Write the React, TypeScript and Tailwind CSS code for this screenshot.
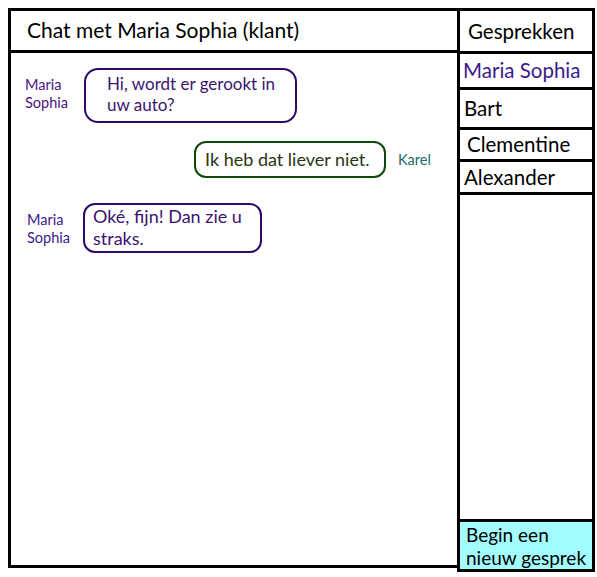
const font = { fontFamily: "Lato, 'Open Sans', sans-serif" }

const gesprekken = [
  { name: "Maria Sophia", h: "h-[33px]", color: "text-[#3b1a8c]", pl: "pl-[3px]" },
  { name: "Bart", h: "h-[37px]", color: "text-black", pl: "pl-[4px]" },
  { name: "Clementine", h: "h-[29px]", color: "text-black", pl: "pl-[7px]" },
  { name: "Alexander", h: "h-[30px]", color: "text-black", pl: "pl-[4px]" },
]

function Label({ children, className }: { children: React.ReactNode; className: string }) {
  return <div className={`text-[14.5px] leading-[18px] ${className}`}>{children}</div>
}

export default function App() {
  return (
    <div className="w-[597px] h-[577px] bg-white pl-[8px] pt-[8px]" style={font}>
      <div className="flex">
        {/* Chat panel */}
        <div className="w-[449px] h-[560px] border-l-[3px] border-t-[3px] border-b-[3px] border-black flex flex-col">
          <div className="h-[42px] border-b-[3px] border-black pl-[16px] flex items-center">
            <h1 className="text-[21px] text-black pb-[2px]">Chat met Maria Sophia (klant)</h1>
          </div>

          <div className="flex flex-col pt-[15px]">
            {/* message 1 */}
            <div className="flex items-start">
              <Label className="w-[73px] pl-[14px] pt-[8px] text-[#4a1480]">
                Maria
                <br />
                Sophia
              </Label>
              <div className="w-[213px] h-[55px] border-2 border-[#2e0a66] rounded-[14px] pl-[21px] pt-[3px] text-[17px] leading-[21px] text-[#3a1470]">
                Hi, wordt er gerookt in
                <br />
                uw auto?
              </div>
            </div>

            {/* message 2 */}
            <div className="flex items-center mt-[18px] ml-[183px]">
              <div className="w-[192px] h-[37px] border-2 border-[#0b4a0b] rounded-[12px] pl-[9px] flex items-center text-[18px] text-[#2a3410]">
                Ik heb dat liever niet.
              </div>
              <div className="ml-[12px] text-[14.5px] text-[#1d6a6a]">Karel</div>
            </div>

            {/* message 3 */}
            <div className="flex items-start mt-[25px]">
              <Label className="w-[72px] pl-[16px] pt-[8px] text-[#3c1a8a]">
                Maria
                <br />
                Sophia
              </Label>
              <div className="w-[179px] h-[50px] border-2 border-[#2e0a66] rounded-[12px] pl-[8px] text-[18px] leading-[22px] text-[#3a1470]">
                Oké, fijn! Dan zie u
                <br />
                straks.
              </div>
            </div>
          </div>
        </div>

        {/* Conversations column */}
        <div className="w-[138px] h-[564px] border-x-[3px] border-t-[3px] border-black flex flex-col">
          <div className="h-[43px] border-b-[3px] border-black pl-[8px] flex items-center text-[20.5px] text-black">
            Gesprekken
          </div>
          {gesprekken.map((g) => (
            <div
              key={g.name}
              className={`${g.h} box-content border-b-[3px] border-black ${g.pl} flex items-center text-[20.5px] whitespace-nowrap ${g.color}`}
            >
              {g.name}
            </div>
          ))}
          <div className="flex-1" />
          <button className="h-[53px] -mx-[3px] border-[3px] border-black bg-[#a3fdff] text-left pl-[6px] text-[19px] leading-[23px] text-black whitespace-nowrap">
            Begin een
            <br />
            nieuw gesprek
          </button>
        </div>
      </div>
    </div>
  )
}
